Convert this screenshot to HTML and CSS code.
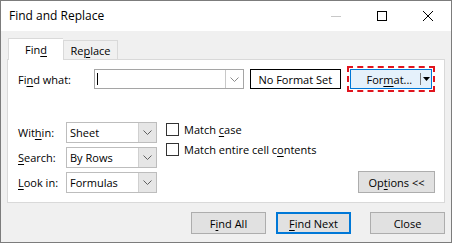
FILE: index.html
```html
<!DOCTYPE html>
<html>
<head>
<meta charset="utf-8">
<link rel="stylesheet" href="styles.css">
</head>
<body>
<div class="window">
  <div class="titlebar">
    <div class="title">Find and Replace</div>
    <div class="caption">
      <div class="cap-btn"><svg width="10" height="10" viewBox="0 0 10 10"><line x1="0" y1="5.5" x2="10" y2="5.5" stroke="#c8c8c8" stroke-width="1"/></svg></div>
      <div class="cap-btn"><svg width="10" height="10" viewBox="0 0 10 10"><rect x="0.5" y="0.5" width="9" height="9" fill="none" stroke="#000" stroke-width="1"/></svg></div>
      <div class="cap-btn"><svg width="10" height="10" viewBox="0 0 10 10"><path d="M0 0 L10 10 M10 0 L0 10" stroke="#000" stroke-width="1"/></svg></div>
    </div>
  </div>
  <div class="content">
    <div class="tabs">
      <div class="tab active"><span>Fin<u>d</u></span></div>
      <div class="tab"><span>Re<u>p</u>lace</span></div>
    </div>
    <div class="panel">
      <div class="row-find">
        <div class="lbl-find">Fi<u>n</u>d what:</div>
        <div class="combo">
          <div class="combo-text"><span class="caret"></span></div>
          <div class="combo-arrow"><svg width="9" height="5" viewBox="0 0 9 5"><path d="M0.5 0.5 L4.5 4.5 L8.5 0.5" fill="none" stroke="#8a8a8a" stroke-width="1"/></svg></div>
        </div>
        <div class="noformat">No Format Set</div>
        <div class="format-outline">
          <div class="format-btn">
            <span class="format-label">For<u>m</u>at...</span>
            <span class="format-sep"></span>
            <span class="format-drop"><svg width="7" height="4" viewBox="0 0 7 4"><path d="M0 0 L7 0 L3.5 4 Z" fill="#000"/></svg></span>
          </div>
        </div>
      </div>
      <div class="options">
        <div class="grid">
          <div class="lbl">Wit<u>h</u>in:</div>
          <div class="select"><span class="select-text">Sheet</span><span class="select-arrow"><svg width="9" height="5" viewBox="0 0 9 5"><path d="M0.5 0.5 L4.5 4.5 L8.5 0.5" fill="none" stroke="#606060" stroke-width="1"/></svg></span></div>
          <div class="lbl"><u>S</u>earch:</div>
          <div class="select"><span class="select-text">By Rows</span><span class="select-arrow"><svg width="9" height="5" viewBox="0 0 9 5"><path d="M0.5 0.5 L4.5 4.5 L8.5 0.5" fill="none" stroke="#606060" stroke-width="1"/></svg></span></div>
          <div class="lbl"><u>L</u>ook in:</div>
          <div class="select"><span class="select-text">Formulas</span><span class="select-arrow"><svg width="9" height="5" viewBox="0 0 9 5"><path d="M0.5 0.5 L4.5 4.5 L8.5 0.5" fill="none" stroke="#606060" stroke-width="1"/></svg></span></div>
        </div>
        <div class="checks">
          <div class="check"><span class="box"></span><span>Match <u>c</u>ase</span></div>
          <div class="check"><span class="box"></span><span>Match entire cell c<u>o</u>ntents</span></div>
        </div>
        <div class="opt-wrap">
          <div class="btn opt-btn"><span>Op<u>t</u>ions &lt;&lt;</span></div>
        </div>
      </div>
    </div>
    <div class="footer">
      <div class="btn"><span>F<u>i</u>nd All</span></div>
      <div class="btn default"><span><u>F</u>ind Next</span></div>
      <div class="btn close"><span>Close</span></div>
    </div>
  </div>
</div>
</body>
</html>
```

FILE: styles.css
```css
* { box-sizing: border-box; }
html, body { margin: 0; padding: 0; }
body {
  font-family: "Open Sans", "Noto Sans", sans-serif;
  font-size: 11px;
  color: #000;
  background: #fff;
}
u { text-decoration: underline; text-underline-offset: 2px; }
.window {
  width: 452px;
  height: 243px;
  border: 1px solid #7c7c7c;
  background: #f0f0f0;
  display: flex;
  flex-direction: column;
}
.titlebar {
  height: 30px;
  background: #fff;
  display: flex;
  align-items: center;
  justify-content: space-between;
}
.title {
  padding-left: 8px;
  font-size: 12px;
  margin-top: -1px;
}
.caption { display: flex; height: 30px; }
.cap-btn {
  width: 46px;
  height: 30px;
  display: flex;
  align-items: center;
  justify-content: center;
}
.content {
  flex: 1;
  padding: 7px 6px 0 6px;
  display: flex;
  flex-direction: column;
}
.tabs {
  display: flex;
  align-items: flex-end;
  height: 21px;
  padding-left: 1px;
  position: relative;
  z-index: 1;
}
.tab {
  height: 19px;
  border: 1px solid #d9d9d9;
  border-bottom: none;
  background: #f0f0f0;
  display: flex;
  align-items: center;
  width: 55px;
  justify-content: center;
}
.tab.active {
  height: 22px;
  background: #fff;
  width: 55px;
  margin-bottom: -1px;
  border-right: none;
}
.panel {
  height: 144px;
  background: #fff;
  border: 1px solid #d9d9d9;
  padding: 9px;
  display: flex;
  flex-direction: column;
}
.row-find {
  display: flex;
  align-items: center;
  height: 20px;
}
.lbl-find { width: 78px; padding-left: 1px; }
.combo {
  width: 151px;
  height: 20px;
  border: 1px solid #a5a5a5;
  display: flex;
}
.combo-text { flex: 1; display: flex; align-items: center; padding-left: 2px; }
.caret { width: 1px; height: 12px; background: #000; }
.combo-arrow {
  width: 18px;
  border-left: 1px solid #c8c8c8;
  display: flex;
  align-items: center;
  justify-content: center;
}
.noformat {
  margin-left: 6px;
  width: 92px;
  height: 20px;
  border: 1px solid #000;
  display: flex;
  align-items: center;
  justify-content: center;
}
.format-outline {
  margin-left: 6px;
  width: 89px;
  height: 26px;
  border: 2px dashed #e0141e;
  padding: 1px;
}
.format-btn {
  height: 100%;
  border: 1px solid #0078d7;
  background: #e5f1fb;
  display: flex;
  align-items: center;
}
.format-label { flex: 1; text-align: center; padding-left: 8px; }
.format-sep { width: 1px; height: 12px; background: #7a7a7a; }
.format-drop { width: 10px; display: flex; justify-content: center; align-items: center; }
.options {
  margin-top: 33px;
  display: flex;
  flex: 1;
}
.grid {
  display: grid;
  grid-template-columns: 49px 91px;
  grid-auto-rows: 21px;
  row-gap: 4px;
  align-items: center;
}
.lbl { padding-left: 1px; }
.select {
  height: 21px;
  border: 1px solid #bdbdbd;
  display: flex;
}
.select-text { flex: 1; display: flex; align-items: center; padding-left: 3px; }
.select-arrow {
  width: 18px;
  background: #e6e6e6;
  border-left: 1px solid #d0d0d0;
  display: flex;
  align-items: center;
  justify-content: center;
}
.checks {
  margin-left: 9px;
  display: flex;
  flex-direction: column;
  gap: 7px;
  padding-top: 1px;
}
.check { display: flex; align-items: center; height: 13px; }
.box {
  width: 13px;
  height: 13px;
  border: 1px solid #333;
  background: #fff;
  margin-right: 5px;
}
.opt-wrap {
  flex: 1;
  display: flex;
  justify-content: flex-end;
  align-items: flex-end;
}
.btn {
  width: 75px;
  height: 22px;
  background: #e1e1e1;
  border: 1px solid #adadad;
  display: flex;
  align-items: center;
  justify-content: center;
}
.opt-btn { width: 77px; height: 22px; }
.footer {
  display: flex;
  justify-content: flex-end;
  padding-top: 9px;
  gap: 10px;
}
.btn.default { border: 2px solid #0078d7; }
.btn.close { margin-left: 9px; }
```
